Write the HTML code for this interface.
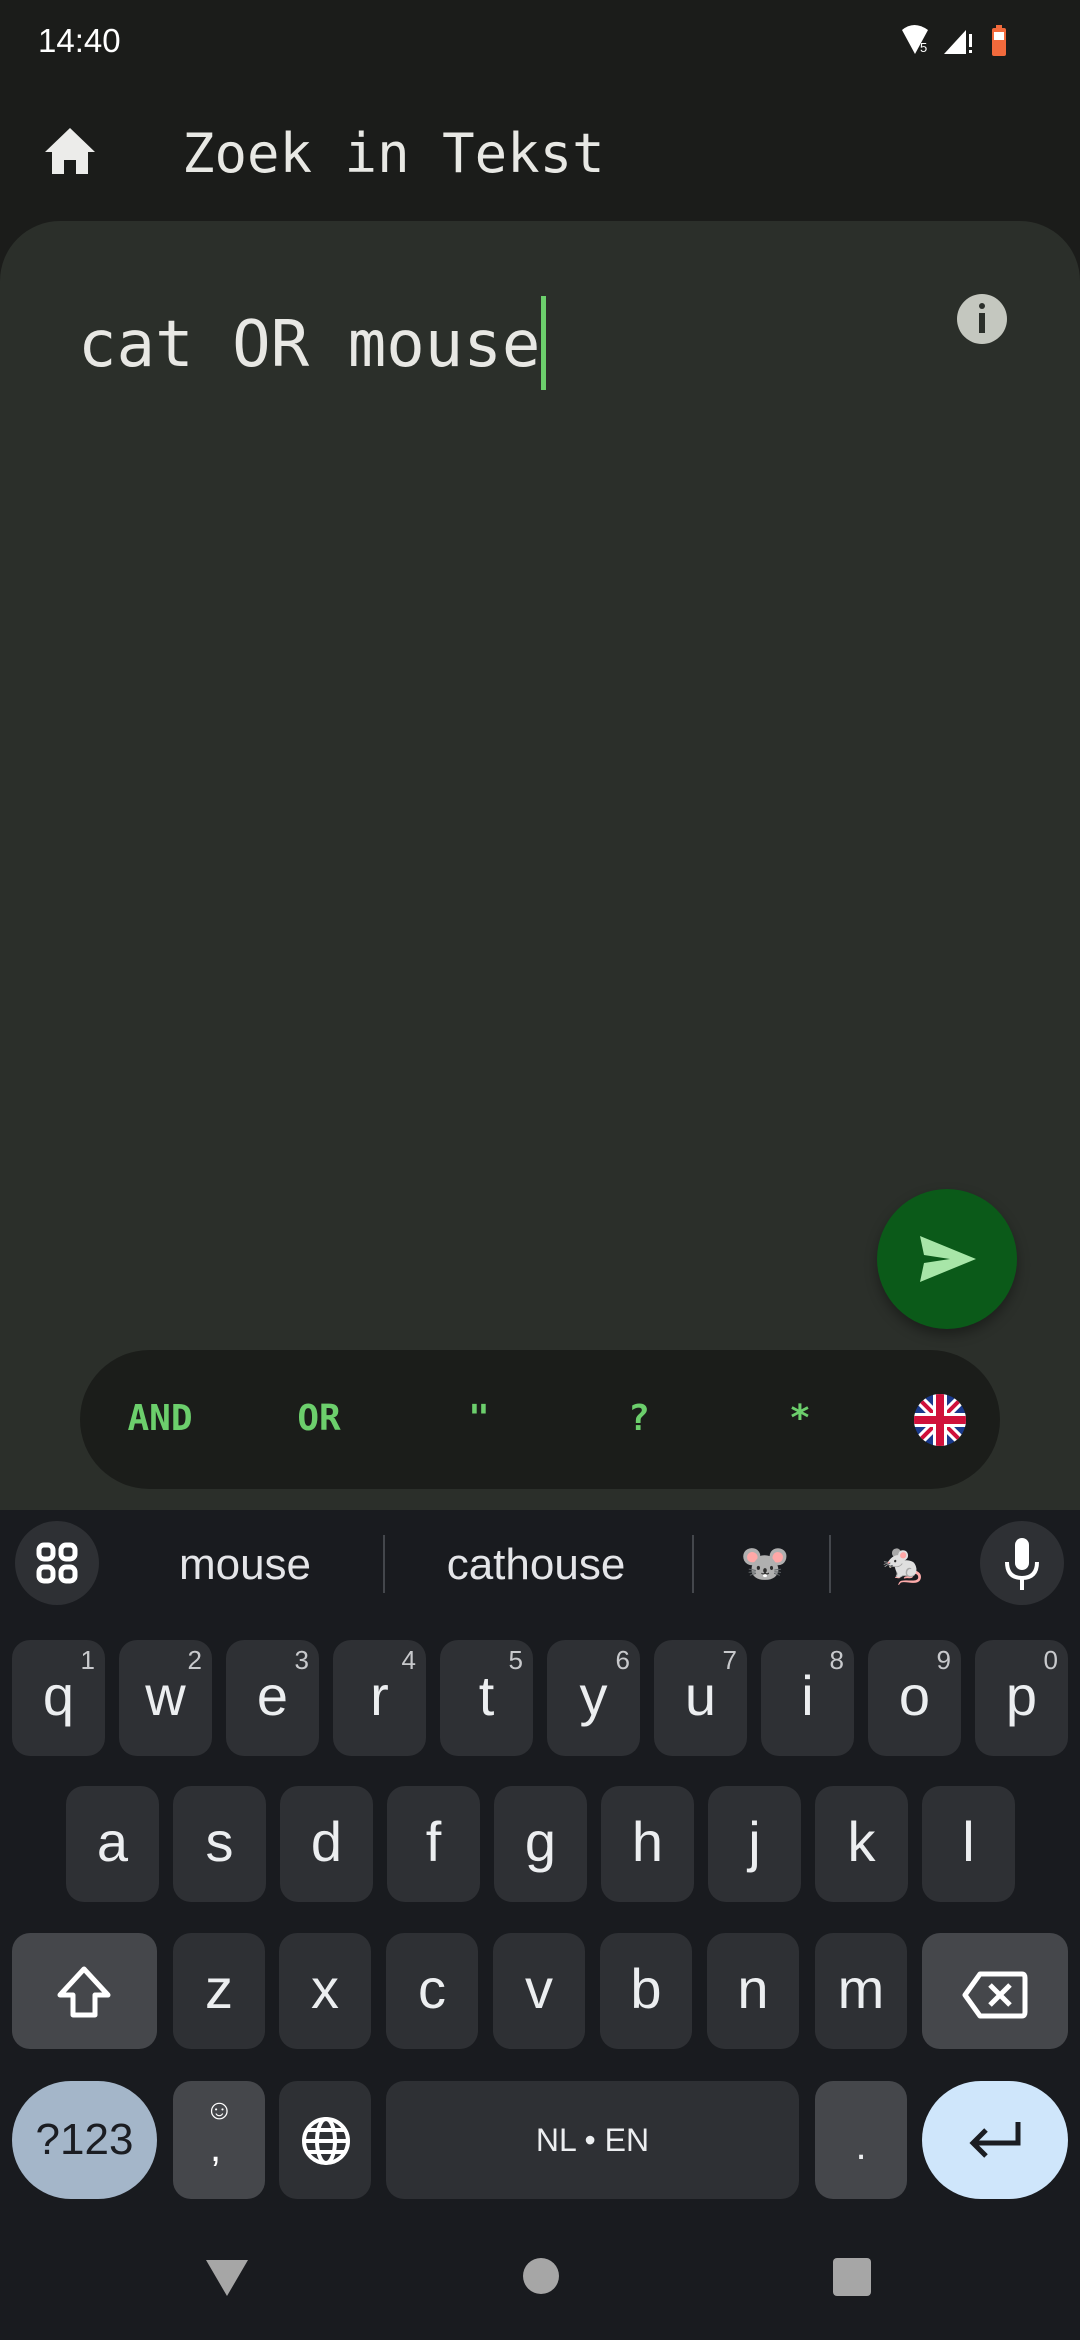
<!DOCTYPE html>
<html><head><meta charset="utf-8"><style>
*{margin:0;padding:0;box-sizing:border-box}
body{width:1080px;height:2340px;background:#1b1c1a;position:relative;overflow:hidden;font-family:"Liberation Sans",sans-serif}
.a{position:absolute}
.mono{font-family:"DejaVu Sans Mono","Liberation Mono",monospace}
.k{position:absolute;background:#2e3034;border-radius:18px;color:#eceef0;font-size:56px;text-align:center;line-height:112px}
.k sup{position:absolute;right:10px;top:-36px;font-size:26px;color:#c8c9cc}
.f{background:#45474b}
.chip{position:absolute;top:1398px;color:#6ccf6c;font-weight:bold;font-size:36px;font-family:"DejaVu Sans Mono","Liberation Mono",monospace;transform:translateX(-50%)}
</style></head><body>
<div class="a" style="left:38px;top:22px;color:#fff;font-size:33px">14:40</div>
<svg class="a" style="left:900px;top:22px" width="110" height="36" viewBox="0 0 110 36">
<path d="M2 8 Q14 -2 28 8 L15 32 Z" fill="#fff"/><text x="20" y="30" fill="#fff" font-size="13" font-family="Liberation Sans">5</text>
<path d="M44 32 L66 8 L66 32 Z" fill="#fff"/><rect x="69" y="12" width="3" height="13" fill="#fff"/><rect x="69" y="28" width="3" height="3" fill="#fff"/>
<rect x="92" y="6" width="14" height="28" rx="2" fill="#f26a3c"/><rect x="96" y="3" width="6" height="4" fill="#f26a3c"/><rect x="94" y="10" width="10" height="8" fill="#fff"/></svg>
<svg class="a" style="left:45px;top:128px" width="50" height="46" viewBox="0 0 50 46"><path d="M25 0 L50 24 L43 24 L43 46 L31 46 L31 32 L19 32 L19 46 L7 46 L7 24 L0 24 Z" fill="#ececea"/></svg>
<div class="a mono" style="left:182px;top:122px;font-size:54px;color:#e8e8e4">Zoek in Tekst</div>
<div class="a" style="left:0;top:221px;width:1080px;height:1300px;background:#2b2f2a;border-radius:60px 60px 0 0"></div>
<div class="a mono" style="left:78px;top:308px;font-size:64px;color:#e8e8e4">cat OR mouse</div>
<div class="a" style="left:541px;top:296px;width:5px;height:94px;background:#6ccf6c"></div>
<div class="a" style="left:957px;top:294px;width:50px;height:50px;border-radius:50%;background:#c4c7bf"></div>
<div class="a" style="left:979px;top:303px;width:6px;height:6px;background:#2b2f2a;border-radius:3px"></div>
<div class="a" style="left:979px;top:313px;width:6px;height:20px;background:#2b2f2a"></div>
<div class="a" style="left:877px;top:1189px;width:140px;height:140px;border-radius:50%;background:#0b5a19;box-shadow:0 6px 12px rgba(0,0,0,.35)"></div>
<svg class="a" style="left:920px;top:1236px" width="56" height="46" viewBox="0 0 56 46"><path d="M0 0 L56 23 L0 46 L4 27 L30 23 L4 19 Z" fill="#a8e6a8"/></svg>
<div class="a" style="left:80px;top:1350px;width:920px;height:139px;background:#1b1d1a;border-radius:70px"></div>
<div class="chip" style="left:160px">AND</div>
<div class="chip" style="left:319px">OR</div>
<div class="chip" style="left:479px">"</div>
<div class="chip" style="left:639px">?</div>
<div class="chip" style="left:800px">*</div>
<svg class="a" style="left:914px;top:1394px" width="52" height="52" viewBox="0 0 52 52"><defs><clipPath id="c"><circle cx="26" cy="26" r="26"/></clipPath></defs><g clip-path="url(#c)"><rect width="52" height="52" fill="#1a3a8c"/><path d="M0 0L52 52M52 0L0 52" stroke="#fff" stroke-width="10"/><path d="M0 0L52 52M52 0L0 52" stroke="#d0103a" stroke-width="4"/><path d="M26 0V52M0 26H52" stroke="#fff" stroke-width="14"/><path d="M26 0V52M0 26H52" stroke="#d0103a" stroke-width="8"/></g></svg>
<div class="a" style="left:0;top:1510px;width:1080px;height:830px;background:#191b1f"></div>
<div class="a" style="left:15px;top:1521px;width:84px;height:84px;border-radius:50%;background:#2e3034"></div>
<svg class="a" style="left:36px;top:1542px" width="42" height="42" viewBox="0 0 42 42" fill="none" stroke="#fff" stroke-width="5"><rect x="3" y="3" width="14" height="14" rx="5"/><rect x="25" y="3" width="14" height="14" rx="5"/><rect x="3" y="25" width="14" height="14" rx="5"/><rect x="25" y="25" width="14" height="14" rx="5"/></svg>
<div class="a" style="left:245px;top:1540px;transform:translateX(-50%);color:#e4e5e8;font-size:44px">mouse</div>
<div class="a" style="left:536px;top:1540px;transform:translateX(-50%);color:#e4e5e8;font-size:44px">cathouse</div>
<div class="a" style="left:383px;top:1535px;width:2px;height:58px;background:#44474c"></div>
<div class="a" style="left:692px;top:1535px;width:2px;height:58px;background:#44474c"></div>
<div class="a" style="left:829px;top:1535px;width:2px;height:58px;background:#44474c"></div>
<div class="a" style="left:740px;top:1540px;font-size:40px">🐭</div>
<div class="a" style="left:878px;top:1540px;font-size:40px">🐁</div>
<div class="a" style="left:980px;top:1521px;width:84px;height:84px;border-radius:50%;background:#2e3034"></div>
<svg class="a" style="left:1004px;top:1538px" width="36" height="52" viewBox="0 0 36 52"><rect x="11" y="0" width="14" height="32" rx="7" fill="#fff"/><path d="M3 24 Q3 40 18 40 Q33 40 33 24" stroke="#fff" stroke-width="4" fill="none"/><rect x="16" y="40" width="4" height="12" fill="#fff"/></svg>
<div class="k" style="left:12px;top:1640px;width:93px;height:116px">q<sup>1</sup></div>
<div class="k" style="left:119px;top:1640px;width:93px;height:116px">w<sup>2</sup></div>
<div class="k" style="left:226px;top:1640px;width:93px;height:116px">e<sup>3</sup></div>
<div class="k" style="left:333px;top:1640px;width:93px;height:116px">r<sup>4</sup></div>
<div class="k" style="left:440px;top:1640px;width:93px;height:116px">t<sup>5</sup></div>
<div class="k" style="left:547px;top:1640px;width:93px;height:116px">y<sup>6</sup></div>
<div class="k" style="left:654px;top:1640px;width:93px;height:116px">u<sup>7</sup></div>
<div class="k" style="left:761px;top:1640px;width:93px;height:116px">i<sup>8</sup></div>
<div class="k" style="left:868px;top:1640px;width:93px;height:116px">o<sup>9</sup></div>
<div class="k" style="left:975px;top:1640px;width:93px;height:116px">p<sup>0</sup></div>
<div class="k" style="left:66px;top:1786px;width:93px;height:116px">a</div>
<div class="k" style="left:173px;top:1786px;width:93px;height:116px">s</div>
<div class="k" style="left:280px;top:1786px;width:93px;height:116px">d</div>
<div class="k" style="left:387px;top:1786px;width:93px;height:116px">f</div>
<div class="k" style="left:494px;top:1786px;width:93px;height:116px">g</div>
<div class="k" style="left:601px;top:1786px;width:93px;height:116px">h</div>
<div class="k" style="left:708px;top:1786px;width:93px;height:116px">j</div>
<div class="k" style="left:815px;top:1786px;width:93px;height:116px">k</div>
<div class="k" style="left:922px;top:1786px;width:93px;height:116px">l</div>
<div class="k f" style="left:12px;top:1933px;width:145px;height:116px"></div>
<svg class="a" style="left:56px;top:1965px" width="56" height="54" viewBox="0 0 56 54"><path d="M28 4 L52 30 L39 30 L39 50 L17 50 L17 30 L4 30 Z" fill="none" stroke="#fff" stroke-width="5" stroke-linejoin="round"/></svg>
<div class="k" style="left:173px;top:1933px;width:92px;height:116px">z</div>
<div class="k" style="left:279px;top:1933px;width:92px;height:116px">x</div>
<div class="k" style="left:386px;top:1933px;width:92px;height:116px">c</div>
<div class="k" style="left:493px;top:1933px;width:92px;height:116px">v</div>
<div class="k" style="left:600px;top:1933px;width:92px;height:116px">b</div>
<div class="k" style="left:707px;top:1933px;width:92px;height:116px">n</div>
<div class="k" style="left:815px;top:1933px;width:92px;height:116px">m</div>
<div class="k f" style="left:922px;top:1933px;width:146px;height:116px"></div>
<svg class="a" style="left:962px;top:1970px" width="66" height="50" viewBox="0 0 66 50"><path d="M18 4 L60 4 Q63 4 63 8 L63 42 Q63 46 60 46 L18 46 L3 25 Z" fill="none" stroke="#fff" stroke-width="5" stroke-linejoin="round"/><path d="M28 15 L48 35 M48 15 L28 35" stroke="#fff" stroke-width="5"/></svg>
<div class="k" style="left:12px;top:2081px;width:145px;height:118px;border-radius:59px;background:#a4b6c9;color:#1b1d22;font-size:44px;line-height:118px">?123</div>
<div class="k f" style="left:173px;top:2081px;width:92px;height:118px"></div>
<div class="a" style="left:205px;top:2094px;font-size:28px;color:#fff">☺</div>
<div class="a" style="left:210px;top:2126px;font-size:40px;color:#fff">,</div>
<div class="k" style="left:279px;top:2081px;width:92px;height:118px"></div>
<svg class="a" style="left:301px;top:2116px" width="50" height="50" viewBox="0 0 50 50" fill="none" stroke="#fff" stroke-width="4"><circle cx="25" cy="25" r="22"/><ellipse cx="25" cy="25" rx="9" ry="22"/><path d="M3 25H47M6 14H44M6 36H44"/></svg>
<div class="k" style="left:386px;top:2081px;width:413px;height:118px;font-size:32px;line-height:118px">NL • EN</div>
<div class="k f" style="left:815px;top:2081px;width:92px;height:118px;font-size:40px;line-height:130px">.</div>
<div class="k" style="left:922px;top:2081px;width:146px;height:118px;border-radius:59px;background:#cfe6fb"></div>
<svg class="a" style="left:966px;top:2118px" width="58" height="46" viewBox="0 0 58 46"><path d="M52 4 L52 25 L8 25 M20 12 L7 25 L20 38" fill="none" stroke="#1b1d22" stroke-width="5"/></svg>
<svg class="a" style="left:206px;top:2260px" width="42" height="36" viewBox="0 0 42 36"><path d="M0 0 H42 L21 36 Z" fill="#a6a6a6"/></svg>
<div class="a" style="left:523px;top:2258px;width:36px;height:36px;border-radius:50%;background:#a6a6a6"></div>
<div class="a" style="left:833px;top:2258px;width:38px;height:38px;border-radius:4px;background:#a6a6a6"></div>
</body></html>
